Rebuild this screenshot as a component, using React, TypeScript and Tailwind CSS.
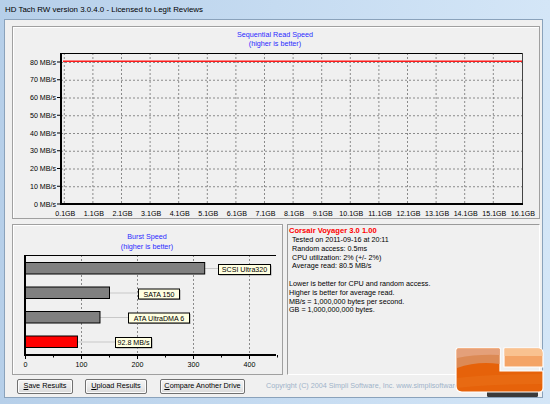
import React from "react";

const GB = Array.from({ length: 17 }, (_, i) => `${i}.1GB`);
const MB = [80, 70, 60, 50, 40, 30, 20, 10, 0];

function SeqChart() {
  const L = 48, T = 26, R = 510, B = 177;
  const y = (v: number) => B - v * 1.775;
  const gx = (k: number) => 51.3 + k * 28.6;
  return (
    <svg width={526} height={191} viewBox="0 0 526 191" className="block">
      <text x={262} y={9.5} fontSize={7.2} fill="#2a2aff" textAnchor="middle">Sequential Read Speed</text>
      <text x={262} y={18.5} fontSize={7.2} fill="#2a2aff" textAnchor="middle">(higher is better)</text>
      {MB.map((v) => (
        <g key={v}>
          <text x={43} y={y(v) + 2.6} fontSize={7.1} fill="#000" textAnchor="end">{`${v} MB/s`}</text>
          <line x1={44} x2={48} y1={y(v)} y2={y(v)} stroke="#000" strokeWidth={1} />
          {v > 0 && (
            <line x1={L} x2={R} y1={y(v) + 0.5} y2={y(v) + 0.5} stroke="#8a8a8a" strokeWidth={1} strokeDasharray="2 2" />
          )}
        </g>
      ))}
      {GB.map((g, k) => (
        <g key={g}>
          {k < 16 && (
            <line x1={gx(k)} x2={gx(k)} y1={T} y2={B} stroke="#8a8a8a" strokeWidth={1} strokeDasharray="2 2" />
          )}
          <text x={gx(k) + 1} y={188.5} fontSize={7.1} fill="#000" textAnchor="middle">{g}</text>
        </g>
      ))}
      <line x1={L} x2={R} y1={T + 0.5} y2={T + 0.5} stroke="#000" strokeWidth={1} />
      <line x1={R - 0.5} x2={R - 0.5} y1={T} y2={B} stroke="#444" strokeWidth={1} />
      <line x1={L} x2={L} y1={T} y2={B + 1} stroke="#000" strokeWidth={2} />
      <line x1={L - 1} x2={R} y1={B} y2={B} stroke="#000" strokeWidth={2} />
      <line x1={50} x2={R - 1} y1={34.3} y2={34.3} stroke="#ff1a1a" strokeWidth={1.6} />
    </svg>
  );
}

const bars = [
  { v: 320, y: 37, fill: "#808080", label: "SCSI Ultra320", bx: 205, bw: 52, by: 39 },
  { v: 150, y: 61.5, fill: "#808080", label: "SATA 150", bx: 125, bw: 41, by: 63.5 },
  { v: 133, y: 86, fill: "#808080", label: "ATA UltraDMA 6", bx: 115, bw: 61, by: 87.5 },
  { v: 92.8, y: 110.5, fill: "#ff0000", label: "92.8 MB/s", bx: 102, bw: 36, by: 112 },
];

function BurstChart() {
  const L = 12, T = 30, R = 263, B = 130;
  const x = (v: number) => L + v * 0.56;
  const ticks = Array.from({ length: 10 }, (_, i) => i * 50);
  return (
    <svg width={269} height={149} viewBox="0 0 269 149" className="block">
      <text x={134} y={13.5} fontSize={7.2} fill="#2a2aff" textAnchor="middle">Burst Speed</text>
      <text x={134} y={23.5} fontSize={7.2} fill="#2a2aff" textAnchor="middle">(higher is better)</text>
      {[100, 200, 300, 400].map((v) => (
        <line key={v} x1={x(v) + 0.5} x2={x(v) + 0.5} y1={T} y2={B} stroke="#8a8a8a" strokeWidth={1} strokeDasharray="2 2" />
      ))}
      {ticks.map((v) => (
        <line key={v} x1={x(v) + 0.5} x2={x(v) + 0.5} y1={B} y2={v % 100 === 0 ? B + 4 : B + 2.5} stroke="#000" strokeWidth={1} />
      ))}
      {[0, 100, 200, 300, 400].map((v) => (
        <text key={v} x={x(v) + 0.5} y={141.5} fontSize={7.1} fill="#000" textAnchor="middle">{v}</text>
      ))}
      {bars.map((b) => (
        <g key={b.label}>
          <line x1={x(b.v)} x2={b.bx} y1={b.y + 6.5} y2={b.y + 6.5} stroke="#c8c8c8" strokeWidth={1} />
          <rect x={L + 0.5} y={b.y + 0.5} width={x(b.v) - L} height={11.5} fill={b.fill} stroke="#000" strokeWidth={1} />
          <rect x={b.bx + 1.5} y={b.by + 1.5} width={b.bw} height={10} fill="#9a9a9a" />
          <rect x={b.bx + 0.5} y={b.by + 0.5} width={b.bw} height={10} fill="#ffffe1" stroke="#000" strokeWidth={1} />
          <text x={b.bx + 0.5 + b.bw / 2} y={b.by + 8.2} fontSize={7.1} fill="#000" textAnchor="middle">{b.label}</text>
        </g>
      ))}
      <line x1={L} x2={R} y1={T + 0.5} y2={T + 0.5} stroke="#000" strokeWidth={1} />
      <line x1={L} x2={L} y1={T} y2={B + 1} stroke="#000" strokeWidth={2} />
      <line x1={L - 1} x2={R} y1={B} y2={B} stroke="#000" strokeWidth={2} />
    </svg>
  );
}

function Logo() {
  return (
    <svg width={96} height={58} viewBox="0 0 96 58" className="block">
      <rect x={35} y={46} width={51} height={7} rx={1.5} fill="#3a3a3a" />
      <path d="M4,6 Q4,4 6,4 H48 V27 H91 V44 Q91,48 87,48 H10 Q4,48 4,42 Z" fill="#e6620a" stroke="#ffffff" strokeWidth={1.2} />
      <path d="M5,5 H47.4 V20 Q25,17 5,24 Z" fill="#dc8a55" />
      <path d="M5,5 H47.4 V11 Q25,10 5,14 Z" fill="#e4a07a" />
      <path d="M5,34 Q40,30 90,30 V40 Q40,40 5,44 Z" fill="#ea6f18" fillOpacity={0.6} />
      <path d="M52,4 H86 Q91,4 91,9 V23 H52 Z" fill="#f4a466" stroke="#ffffff" strokeWidth={1.2} />
      <path d="M52.6,4.6 H86 Q90.4,4.6 90.4,9 V12 H52.6 Z" fill="#f9c290" />
    </svg>
  );
}

function Btn({ first, rest }: { first: string; rest: string }) {
  return (
    <div className="h-[15px] px-[1px] flex items-center justify-center whitespace-nowrap rounded-[2px] border border-[#707070] bg-gradient-to-b from-[#f4f4f4] via-[#ebebeb] to-[#d9d9d9] text-[7.3px] text-black shadow-[inset_0_0_0_1px_#fcfcfc]">
      <span><span className="underline">{first}</span>{rest}</span>
    </div>
  );
}

export default function App() {
  return (
    <div className="w-[550px] h-[404px] relative overflow-hidden bg-gradient-to-r from-[#b6cfe9] via-[#c5dbf1] to-[#d4e6f7] font-['Liberation_Sans',Arial,sans-serif] flex flex-col">
      <div className="h-[19px] shrink-0 flex items-center pl-[5px] text-[7.9px] text-black">
        HD Tach RW version 3.0.4.0 - Licensed to Legit Reviews
      </div>
      <div className="ml-[4px] mr-[7px] mb-[6px] flex-1 border border-[#8aa2bb] bg-[#f0f0f0] flex flex-col pl-[7px] pr-[2px] pt-[6px]">
        <div className="w-[528px] h-[193px] border border-[#a0a0a0] shadow-[inset_1px_1px_0_#ffffff]">
          <SeqChart />
        </div>
        <div className="mt-[5px] flex gap-[4px]">
          <div className="w-[271px] h-[151px] border border-[#a0a0a0] shadow-[inset_1px_1px_0_#ffffff]">
            <BurstChart />
          </div>
          <div className="w-[253px] h-[151px] border border-t-[#9a9a9a] border-l-[#9a9a9a] border-r-[#ffffff] border-b-[#ffffff] bg-[#f0f0f0] pl-[1px] pt-[1px] text-[7.2px] leading-[8.8px] text-black">
            <div className="text-[#ff0000] font-bold text-[7.6px] leading-[10px]">Corsair Voyager 3.0 1.00</div>
            <div className="pl-[3px]">
              <div>Tested on 2011-09-16 at 20:11</div>
              <div>Random access: 0.5ms</div>
              <div>CPU utilization: 2% (+/- 2%)</div>
              <div>Average read: 80.5 MB/s</div>
            </div>
            <div className="h-[8.8px]" />
            <div>Lower is better for CPU and random access.</div>
            <div>Higher is better for average read.</div>
            <div>MB/s = 1,000,000 bytes per second.</div>
            <div>GB = 1,000,000,000 bytes.</div>
          </div>
        </div>
        <div className="mt-[4px] flex items-center pl-[5px]">
          <div className="w-[56px]"><Btn first="S" rest="ave Results" /></div>
          <div className="w-[62px] ml-[12px]"><Btn first="U" rest="pload Results" /></div>
          <div className="w-[85px] ml-[13px]"><Btn first="C" rest="ompare Another Drive" /></div>
          <div className="ml-[21px] text-[7.2px] text-[#9fb3c9] whitespace-nowrap">
            Copyright (C) 2004 Simpli Software, Inc. www.simplisoftware.com
          </div>
        </div>
      </div>
      <div className="absolute left-[452px] top-[344px]">
        <Logo />
      </div>
    </div>
  );
}
